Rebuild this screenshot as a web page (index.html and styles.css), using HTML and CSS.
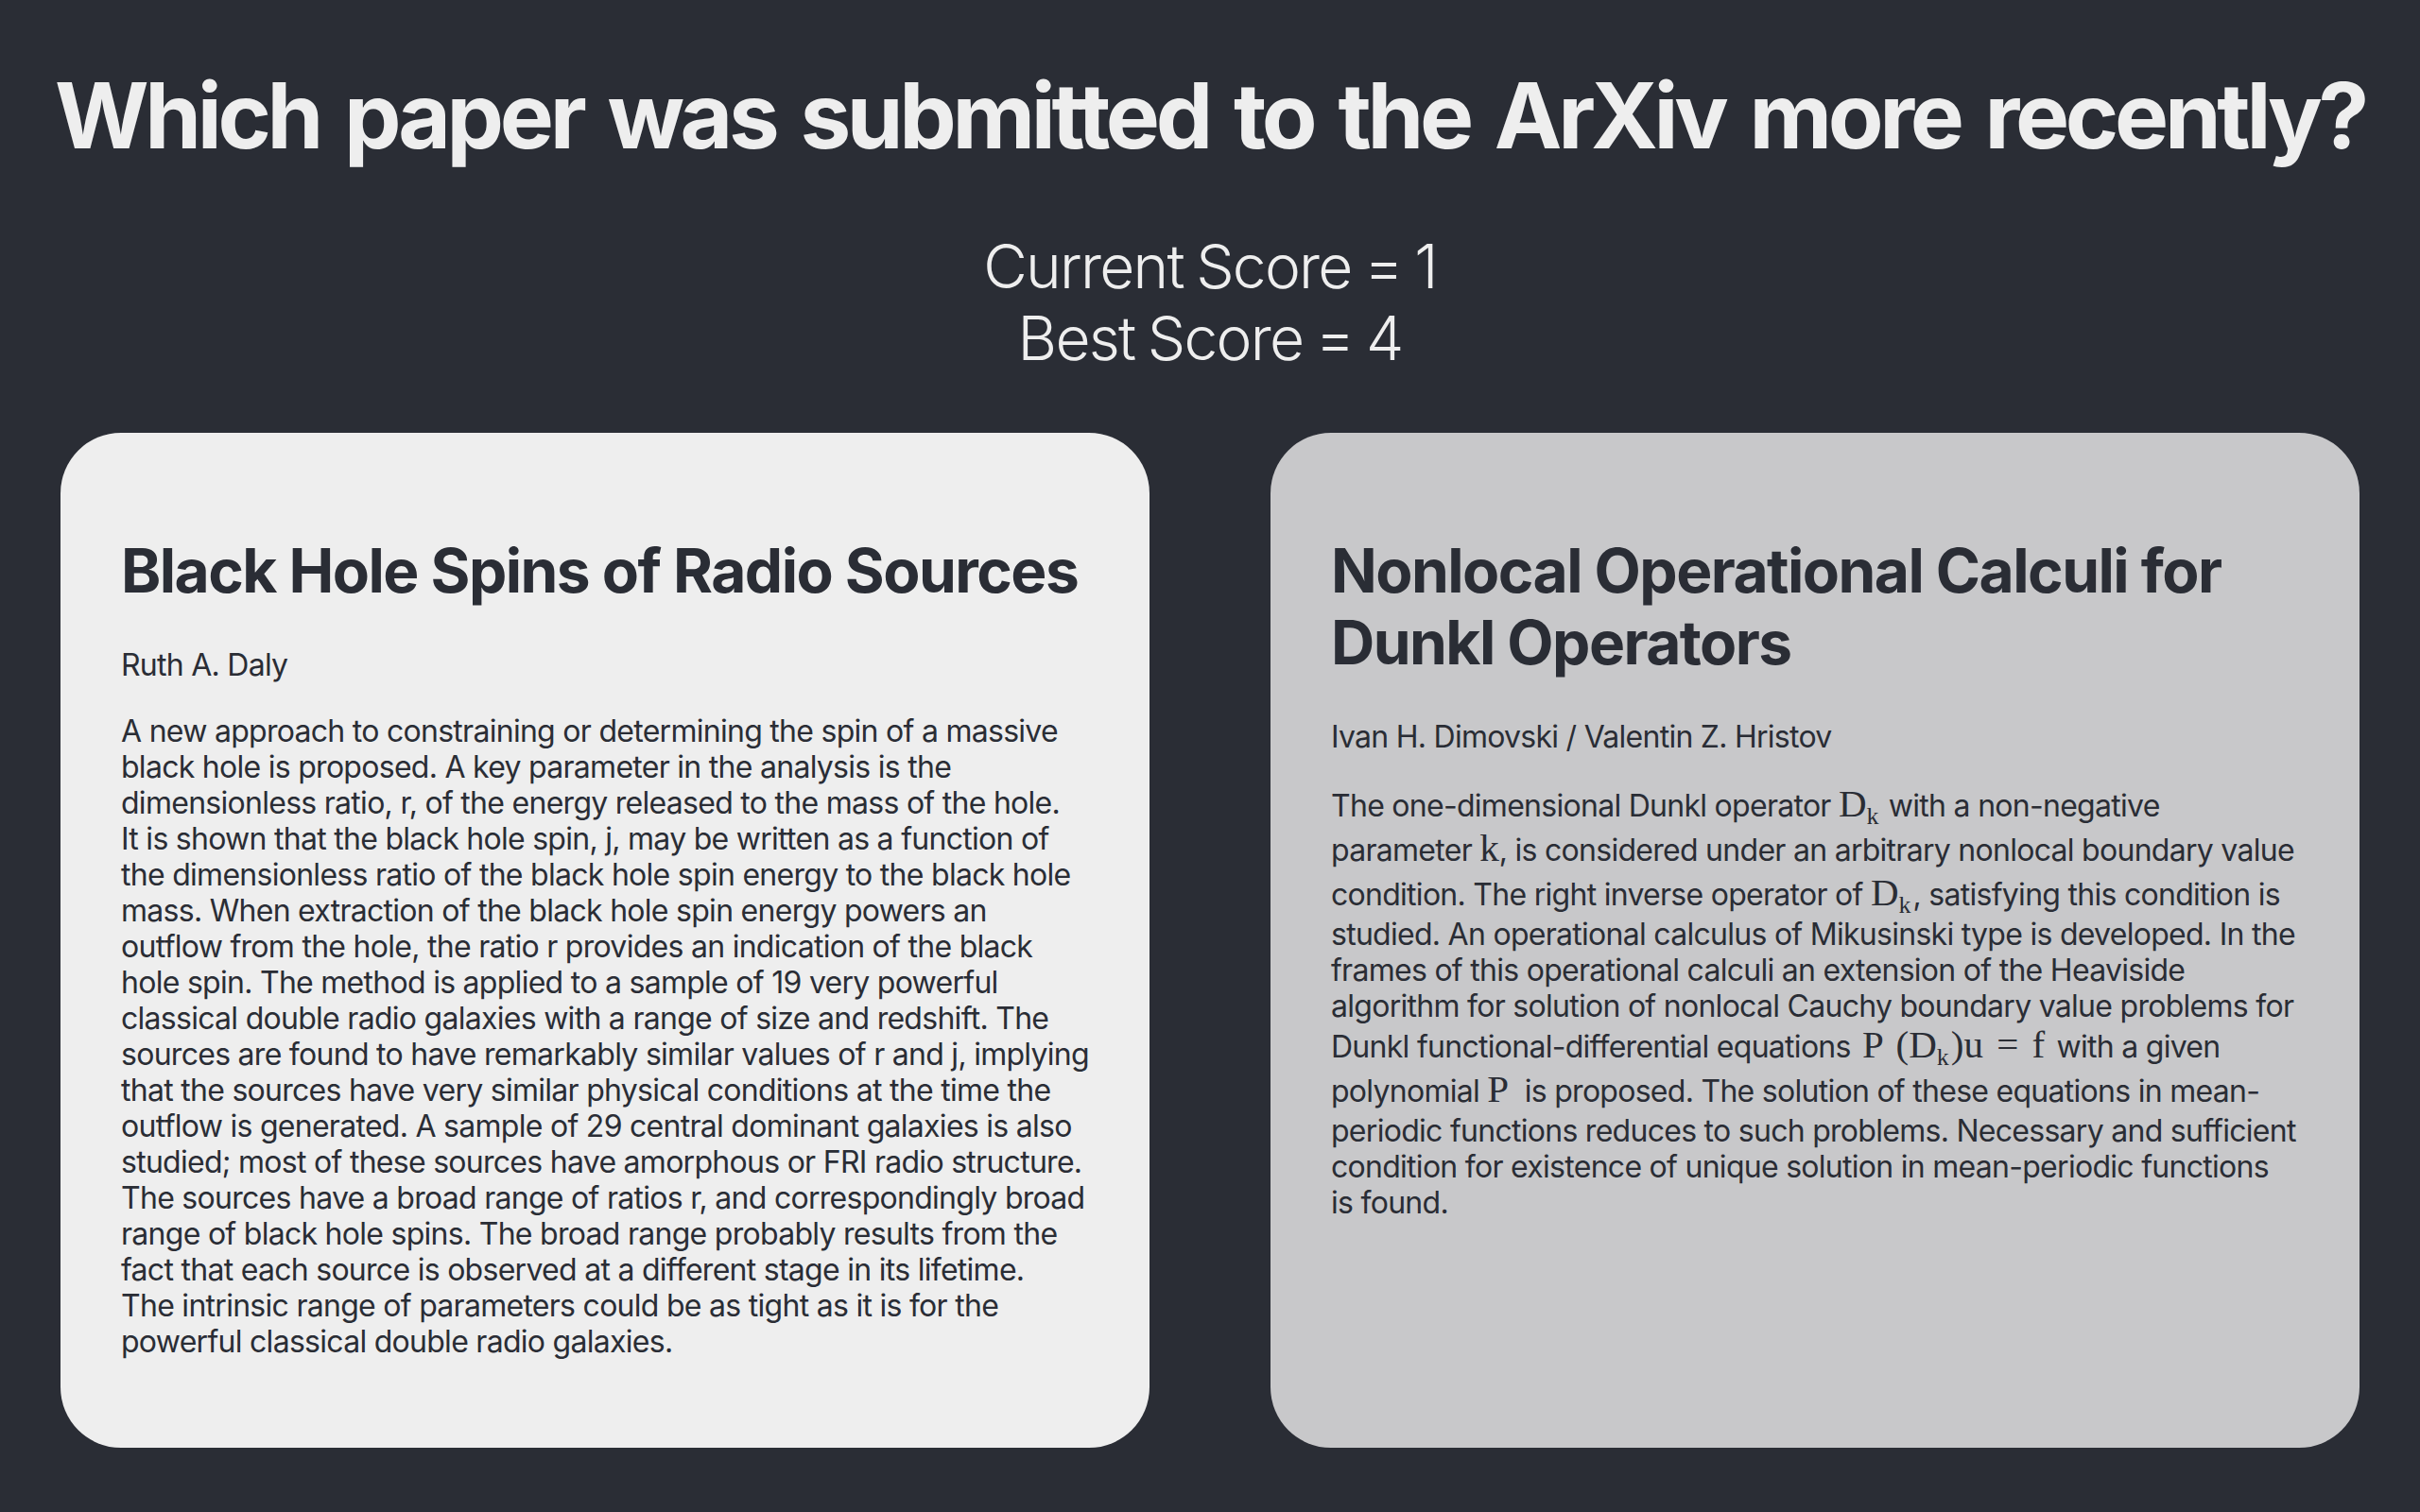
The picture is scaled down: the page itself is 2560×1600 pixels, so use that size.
FILE: index.html
```html
<!DOCTYPE html>
<html lang="en">
<head>
    <meta charset="UTF-8">
    <meta name="viewport" content="width=device-width, initial-scale=1.0">
    <title>ArXiv Quiz</title>
    <link rel="stylesheet" href="styles.css">
</head>
<body>
    <header class="top">
        <h1>Which paper was submitted to the ArXiv more recently?</h1>
        <p class="score">Current Score = 1<br>Best Score = 4</p>
    </header>
    <main class="papers">
        <article class="paper">
            <h2>Black Hole Spins of Radio Sources</h2>
            <p class="authors">Ruth A. Daly</p>
            <p class="abstract">A new approach to constraining or determining the spin of a massive black hole is proposed. A key parameter in the analysis is the dimensionless ratio, r, of the energy released to the mass of the hole.<br>It is shown that the black hole spin, j, may be written as a function of the dimensionless ratio of the black hole spin energy to the black hole mass. When extraction of the black hole spin energy powers an outflow from the hole, the ratio r provides an indication of the black hole spin. The method is applied to a sample of 19 very powerful classical double radio galaxies with a range of size and redshift. The sources are found to have remarkably similar values of r and j, implying that the sources have very similar physical conditions at the time the outflow is generated. A sample of 29 central dominant galaxies is also studied; most of these sources have amorphous or FRI radio structure. The sources have a broad range of ratios r, and correspondingly broad range of black hole spins. The broad range probably results from the fact that each source is observed at a different stage in its lifetime.<br>The intrinsic range of parameters could be as tight as it is for the<br>powerful classical double radio galaxies.</p>
        </article>
        <article class="paper paper-dim">
            <h2>Nonlocal Operational Calculi for Dunkl Operators</h2>
            <p class="authors">Ivan H. Dimovski / Valentin Z. Hristov</p>
            <p class="abstract">The one-dimensional Dunkl operator <span class="math">D<sub>k</sub></span> with a non-negative parameter <span class="math">k</span>, is considered under an arbitrary nonlocal boundary value condition. The right inverse operator of <span class="math">D<sub>k</sub></span>, satisfying this condition is studied. An operational calculus of Mikusinski type is developed. In the frames of this operational calculi an extension of the Heaviside algorithm for solution of nonlocal Cauchy boundary value problems for Dunkl functional-differential equations <span class="math math-eq">P (D<sub>k</sub>)u = f</span> with a given polynomial <span class="math">P</span>&nbsp; is proposed. The solution of these equations in mean-periodic functions reduces to such problems. Necessary and sufficient condition for existence of unique solution in mean-periodic functions<br>is found.</p>
        </article>
    </main>
</body>
</html>
```

FILE: styles.css
```css
/* Global Styles */
body {
    margin: 0;
    min-height: 1600px;
    background-color: #2a2d35;
    color: #eeeeee;
    font-family: Inter, sans-serif;
}
/* Header Styles */
.top {
    text-align: center;
    padding-top: 64px;
}
.top h1 {
    margin: 0;
    font-size: 96px;
    font-weight: 700;
    line-height: 116px;
    letter-spacing: -0.045em;
    word-spacing: 7.6px;
    white-space: nowrap;
}
.score {
    margin: 64px 0 0;
    font-size: 64px;
    font-weight: 350;
    line-height: 76px;
    letter-spacing: -0.027em;
    word-spacing: -3px;
}
/* Paper Cards */
.papers {
    display: flex;
    gap: 128px;
    margin-top: 62px;
    padding: 0 64px;
}
.paper {
    flex: 1;
    min-width: 0;
    min-height: 946px;
    padding: 64px;
    border-radius: 64px;
    background-color: #eeeeee;
    color: #2a2d35;
}
.paper-dim {
    background-color: #c8c8ca;
}
.paper h2 {
    margin: 44px 0 0;
    font-size: 64px;
    font-weight: 700;
    line-height: 76px;
    letter-spacing: -0.024em;
}
.authors {
    margin: 43px 0 0;
    font-size: 32px;
    line-height: 38px;
    letter-spacing: -0.023em;
}
.abstract {
    margin: 30px -4px 0 0;
    font-size: 32px;
    line-height: 38px;
    letter-spacing: -0.0225em;
}
.paper:first-child .abstract {
    margin-top: 32px;
}
.math {
    display: inline-block;
    padding-bottom: 5px;
    font-family: "Liberation Serif", serif;
    font-size: 41px;
    line-height: 42px;
    letter-spacing: 0;
    word-spacing: 4px;
}
.math-eq {
    margin: 0 4px;
}
.math sub {
    margin-right: 2px;
    font-size: 26px;
    line-height: 0;
    vertical-align: -8px;
}
```
